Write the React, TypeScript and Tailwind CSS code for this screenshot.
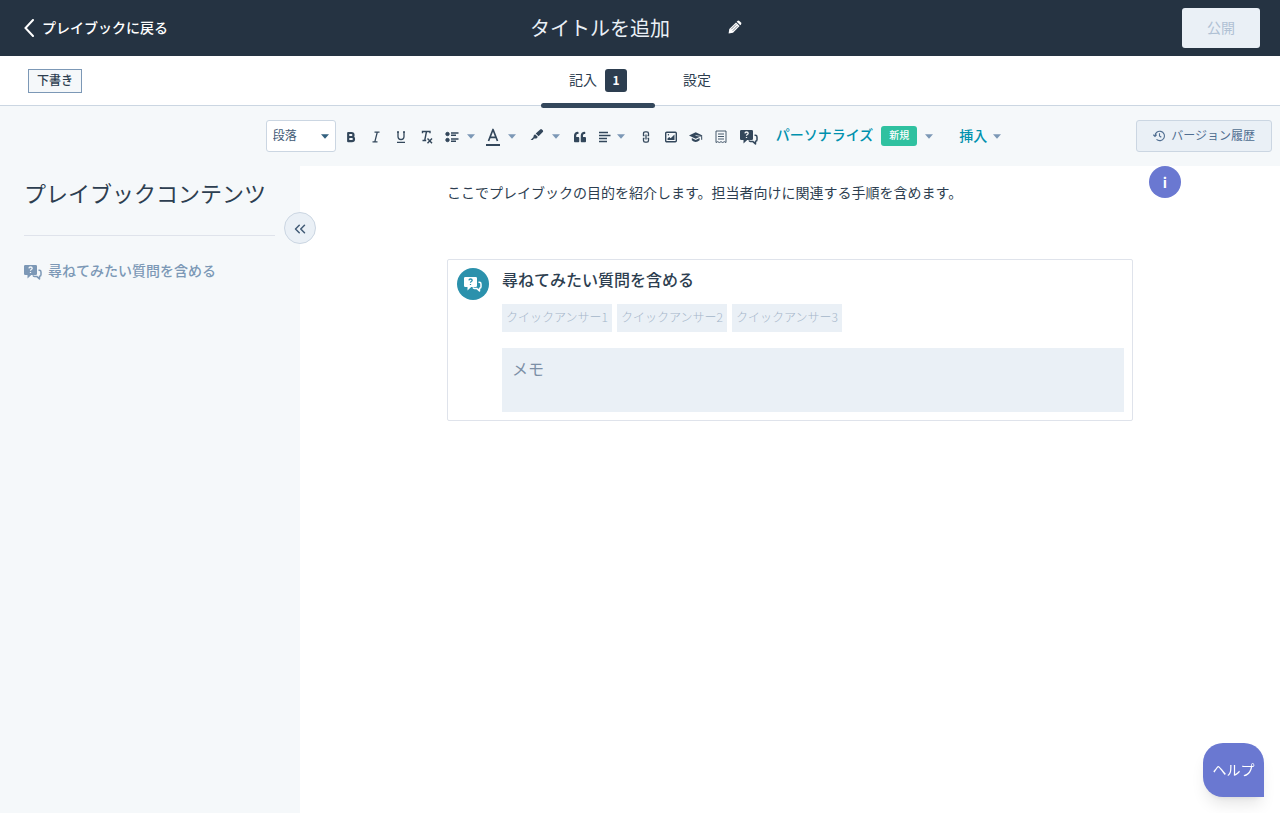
import React from 'react'
import { ChevronsLeft } from 'lucide-react'
import { FaQuoteLeft } from 'react-icons/fa'

const quickAnswers = ['クイックアンサー1', 'クイックアンサー2', 'クイックアンサー3']

const QuestionIcon = ({ className, mark }: { className: string; mark: string }) => (
  <svg viewBox="0 0 18 16" className={className} aria-hidden="true">
    <path
      d="M1.2 1h10.600q1.200 0 1.200 1.200v7.600q0 1.200-1.200 1.200H7.200L3.500 14.500V11H1.200Q0 11 0 9.800V2.200Q0 1 1.200 1z"
      fill="currentColor"
    />
    <path
      d="M14.500 6.200h.8q1.700 0 1.700 1.700v2.900q0 1.500-1.500 1.500V15l-2.800-2.600h-2.200q-1.200 0-1.500-1"
      fill="none"
      stroke="currentColor"
      strokeWidth="1.500"
      strokeLinejoin="round"
    />
    <path
      d="M4.900 4.300q.2-1.300 1.700-1.300t1.600 1.300q0 .8-.9 1.200-.8.400-.8 1.200M6.500 7.900v1.200"
      fill="none"
      stroke={mark}
      strokeWidth="1.300"
    />
  </svg>
)

const PencilIcon = () => (
  <svg viewBox="0 0 14 14" className="w-3.5 h-3.5" fill="currentColor" aria-hidden="true">
    <path d="M.6 13.400l.7-4.400L8 2.400 11.600 6 5 12.700z" />
    <path d="M8.700 1.700l.7-.7q1-.8 2 0l1.600 1.600q.8 1 0 2l-.7.700z" />
    <path d="M3.200 9.300L8.200 4.300M4.700 10.800l5-5" stroke="#253342" strokeWidth=".6" />
  </svg>
)

const Caret = ({ label }: { label: string }) => (
  <button type="button" aria-label={label} className="w-3 h-6 flex items-center justify-center text-[#7c98b6]">
    <svg viewBox="0 0 8 5" className="w-2 h-[5px]" fill="currentColor">
      <path d="M0 .3h8L4 4.700z" />
    </svg>
  </button>
)

const ToolButton = ({
  label,
  className = 'w-[25px]',
  children,
}: {
  label: string
  className?: string
  children: React.ReactNode
}) => (
  <button type="button" aria-label={label} className={`h-6 pt-0.5 flex items-center justify-center ${className}`}>
    {children}
  </button>
)

const Header = () => (
  <header className="h-14 bg-[#253342] text-white grid grid-cols-[1fr_auto_1fr] items-center pl-6 pr-5">
    <a href="#" className="flex items-center gap-2 text-sm font-medium">
      <svg viewBox="0 0 10 18" className="w-2.5 h-[18px]" fill="none" stroke="currentColor" strokeWidth="2">
        <path d="M9 1L1.500 9 9 17" strokeLinecap="round" />
      </svg>
      <span className="pb-0.5">プレイブックに戻る</span>
    </a>
    <div className="flex items-center pr-3">
      <h1 className="text-xl font-normal text-[#eaf0f6]">タイトルを追加</h1>
      <button type="button" aria-label="タイトルを編集" className="ml-[58px] w-3.5 h-6 pb-0.5 flex items-center">
        <PencilIcon />
      </button>
    </div>
    <button
      type="button"
      disabled
      className="justify-self-end h-10 w-[78px] pb-0.5 rounded-[3px] bg-[#eaf0f6] text-sm text-[#b0c1d4]"
    >
      公開
    </button>
  </header>
)

const TabBar = () => (
  <div className="h-[50px] border-b border-[#cbd6e2] grid grid-cols-[1fr_auto_1fr] px-7">
    <div className="flex items-center pb-0.5">
      <span className="h-6 px-2 border border-[#7c98b6] bg-[#f5f8fa] text-xs leading-5 font-medium">下書き</span>
    </div>
    <nav className="flex h-[52px]">
      <a href="#" className="relative px-7 h-12 flex items-center gap-2 text-sm">
        <span className="pb-0.5">記入</span>
        <span className="w-[22px] h-[23px] rounded-[3px] bg-[#2d3e50] text-white text-xs font-bold flex items-center justify-center">
          1
        </span>
        <span className="absolute left-0 right-0 top-[47px] h-[5px] rounded-full bg-[#33475b]"></span>
      </a>
      <a href="#" className="px-7 h-12 flex items-center text-sm">
        <span className="pb-0.5">設定</span>
      </a>
    </nav>
  </div>
)

const Toolbar = () => (
  <div className="h-[60px] bg-[#f5f8fa] grid grid-cols-[1fr_auto_1fr] items-center pr-2">
    <div></div>
    <div className="flex items-center text-[#33475b] pr-[3px]">
      <div className="relative">
        <select
          aria-label="段落スタイル"
          className="appearance-none w-[70px] h-8 pl-1.5 pb-0.5 rounded-[3px] border border-[#cbd6e2] bg-white text-xs text-[#425b76]"
        >
          <option>段落</option>
        </select>
        <svg
          viewBox="0 0 8 5"
          className="absolute right-[7px] top-3.5 w-2 h-[5px] pointer-events-none"
          fill="#33617f"
        >
          <path d="M0 .3h8L4 4.700z" />
        </svg>
      </div>
      <ToolButton label="太字" className="w-[25px] ml-[3px]">
        <svg viewBox="0 0 10 12" className="w-2.5 h-3" fill="none" stroke="currentColor" strokeWidth="2.200">
          <path d="M2.200 2h3.300a2 2 0 010 4H2.200zM2.200 6h3.700a2 2 0 010 4.200H2.200z" strokeLinejoin="round" />
        </svg>
      </ToolButton>
      <ToolButton label="斜体">
        <svg viewBox="0 0 10 12" className="w-2.5 h-3" fill="none" stroke="currentColor" strokeWidth="1.300">
          <path d="M3.500 1.200h5M1.500 10.800h5M6.300 1.200L3.800 10.800" />
        </svg>
      </ToolButton>
      <ToolButton label="下線">
        <svg viewBox="0 0 10 12" className="w-2.5 h-3" fill="none" stroke="currentColor" strokeWidth="1.300">
          <path d="M1 1h2M7 1h2M2 1v4.500a3 3 0 006 0V1M1 11.300h8" />
        </svg>
      </ToolButton>
      <ToolButton label="書式をクリア" className="w-[26px]">
        <svg viewBox="0 0 12 14" className="w-3 h-3.5" fill="none" stroke="currentColor" strokeWidth="1.400">
          <path d="M1.500 3.200V1.500h7.500v1.700M5.500 1.500L3.800 10M1.500 10.500h3.700M6.500 8.500l4.500 4.800M11 8.500l-4.500 4.800" />
        </svg>
      </ToolButton>
      <ToolButton label="リスト">
        <svg viewBox="0 0 14 12" className="w-3.5 h-3" fill="currentColor" stroke="currentColor">
          <circle cx="2.500" cy="3" r="1.700" />
          <circle cx="2.500" cy="9" r="1.700" />
          <path d="M6 2h7.500M6 4.300h5M6 8h7.500M6 10.300h5" strokeWidth="1.400" />
        </svg>
      </ToolButton>
      <Caret label="リストの種類" />
      <ToolButton label="文字色" className="w-[25px] ml-1">
        <svg viewBox="0 0 14 18" className="w-3.5 h-[18px]" fill="none" stroke="currentColor">
          <path d="M2.500 13L7 1.500 11.500 13M4 9.300h6" strokeWidth="1.700" strokeLinejoin="round" />
          <path d="M0 17h14" strokeWidth="2" />
        </svg>
      </ToolButton>
      <Caret label="文字色を選択" />
      <ToolButton label="ハイライト" className="w-[25px] pb-1 ml-[7px]">
        <svg viewBox="0 0 14 14" className="w-3.5 h-3.5" fill="currentColor">
          <path d="M10.200 1.400q.8-.8 1.700 0l.9.900q.8.900 0 1.700L8.600 8.300 5.700 5.500z" />
          <path d="M5 6.200L7.900 9l-1.500 1.500q-1.300.2-2.400 0L2.800 12H.6L3.500 9q-.1-1 .2-1.500z" />
        </svg>
      </ToolButton>
      <Caret label="ハイライト色を選択" />
      <ToolButton label="引用" className="w-[25px] ml-1.5">
        <FaQuoteLeft className="w-3 h-3" />
      </ToolButton>
      <ToolButton label="配置" className="w-5 ml-0.5">
        <svg viewBox="0 0 12 12" className="w-3 h-3" stroke="currentColor" strokeWidth="1.400">
          <path d="M0 1.500h9M0 4.500h11.500M0 7.500h8M0 10.500h8" />
        </svg>
      </ToolButton>
      <Caret label="配置を選択" />
      <ToolButton label="リンク" className="w-[25px] ml-[7px]">
        <svg viewBox="0 0 8 12" className="w-2 h-3" fill="none" stroke="currentColor" strokeWidth="1.300">
          <path d="M2.500 4.700h-1V2.500q0-1.700 1.600-1.700h1.800q1.600 0 1.600 1.700v2.200h-1M2.500 7.300h-1v2.200q0 1.700 1.600 1.700h1.800q1.600 0 1.600-1.700V7.300h-1M4 3.500v5" />
        </svg>
      </ToolButton>
      <ToolButton label="画像">
        <svg viewBox="0 0 12 12" className="w-3 h-3">
          <rect x=".7" y="1.200" width="10.600" height="9.600" rx="1" fill="none" stroke="currentColor" strokeWidth="1.400" />
          <path d="M2.500 9V7.500l1.700-1.500 1.500 1.300L9.500 3.500V9z" fill="currentColor" />
          <circle cx="3.400" cy="3.800" r=".7" fill="currentColor" />
        </svg>
      </ToolButton>
      <ToolButton label="ナレッジ">
        <svg viewBox="0 0 14 12" className="w-3.5 h-3" fill="currentColor">
          <path d="M6.700 1.300L13.500 4.500 6.700 7.700 0 4.500z" />
          <path d="M2.800 7l3.900 1.900L10.600 7v2.300q-3.900 3.600-7.800 0z" />
          <path d="M6.700 4.500l6 .8v3.500" fill="none" stroke="currentColor" />
          <path d="M6.500 4.400l5.200 1" stroke="#f5f8fa" strokeWidth=".7" />
        </svg>
      </ToolButton>
      <ToolButton label="スニペット">
        <svg viewBox="0 0 12 14" className="w-3 h-3.5" fill="none" stroke="currentColor">
          <path d="M1 12.500V1h10v11.500l-1.700-.8-1.600.8-1.700-.8-1.700.8-1.600-.8z" strokeWidth=".9" />
          <path d="M3 4h6M3 6.500h6M3 9h6" strokeWidth=".9" />
        </svg>
      </ToolButton>
      <ToolButton label="質問" className="w-[30px]">
        <QuestionIcon className="w-[18px] h-4" mark="#f5f8fa" />
      </ToolButton>
      <button type="button" className="ml-3 flex items-center gap-2 text-sm font-medium text-[#0091ae]">
        <span className="pb-1">パーソナライズ</span>
        <span className="w-9 h-5 rounded-[3px] bg-[#2fc1a0] text-white text-[10px] leading-[18px] font-medium">新規</span>
      </button>
      <div className="ml-1.5 flex">
        <Caret label="パーソナライズを選択" />
      </div>
      <button type="button" className="ml-6 mr-1 pb-0.5 text-sm font-medium text-[#0091ae]">
        挿入
      </button>
      <Caret label="挿入を選択" />
    </div>
    <button
      type="button"
      className="justify-self-end h-8 px-4 flex items-center gap-1.5 rounded-[3px] border border-[#cbd6e2] bg-[#eaf0f6] text-xs text-[#506e91]"
    >
      <svg viewBox="0 0 12 12" className="w-3 h-3" fill="none" stroke="currentColor" strokeWidth="1.100">
        <path d="M2 6a4.700 4.700 0 111.500 3.400M.2 4.700L2 6.500l1.700-1.800M6.500 3.300V6l1.800 1.300" />
      </svg>
      <span className="pb-0.5">バージョン履歴</span>
    </button>
  </div>
)

const Sidebar = () => (
  <aside className="relative w-[300px] shrink-0 bg-[#f5f8fa] pl-6 pr-[25px]">
    <h2 className="h-[70px] pt-2 border-b border-[#dfe3eb] text-[22px] leading-9 font-normal">
      プレイブックコンテンツ
    </h2>
    <a href="#" className="mt-6 flex items-center gap-1.5 text-sm font-medium text-[#7c98b6]">
      <QuestionIcon className="mt-1 w-[18px] h-4" mark="#f5f8fa" />
      尋ねてみたい質問を含める
    </a>
    <button
      type="button"
      aria-label="サイドバーを閉じる"
      className="absolute -right-4 top-[46px] w-8 h-8 pt-0.5 rounded-full border border-[#cbd6e2] bg-[#eaf0f6] flex items-center justify-center text-[#425b76]"
    >
      <ChevronsLeft size={18} />
    </button>
  </aside>
)

const QuestionCard = () => (
  <section className="mt-[55px] border border-[#dfe3eb] rounded-xs pt-2 pl-[9px] pr-2 pb-2 flex gap-[13px]">
    <div className="w-8 h-8 shrink-0 rounded-full bg-[#2b91ac] text-white flex items-center justify-center">
      <QuestionIcon className="w-[18px] h-4" mark="#2b91ac" />
    </div>
    <div className="flex-1">
      <h3 className="pb-3.5 text-base leading-[22px] font-medium">尋ねてみたい質問を含める</h3>
      <div className="flex gap-[5px]">
        {quickAnswers.map((answer) => (
          <button
            key={answer}
            type="button"
            disabled
            className="h-7 px-1 pb-0.5 bg-[#eaf0f6] text-xs font-light text-[#a5b6ca]"
          >
            {answer}
          </button>
        ))}
      </div>
      <textarea
        aria-label="メモ"
        placeholder="メモ"
        className="mt-4 block w-full h-16 px-2.5 py-2 resize-none bg-[#eaf0f6] text-base placeholder:text-[#7c8fa6]"
      ></textarea>
    </div>
  </section>
)

const App = () => {
  return (
    <div className="min-h-screen flex flex-col bg-white text-[#2d3e50] font-['Noto_Sans_CJK_JP',sans-serif]">
      <Header />
      <TabBar />
      <Toolbar />
      <div className="flex-1 flex">
        <Sidebar />
        <main className="relative flex-1">
          <div className="w-[70%] mx-auto pt-3.5">
            <p className="text-sm leading-6">ここでプレイブックの目的を紹介します。担当者向けに関連する手順を含めます。</p>
            <QuestionCard />
          </div>
          <button
            type="button"
            aria-label="情報"
            className="absolute right-[99px] top-0 w-8 h-8 rounded-full bg-[#6a78d1] text-white text-sm font-bold flex items-center justify-center"
          >
            i
          </button>
        </main>
      </div>
      <button
        type="button"
        className="fixed right-4 bottom-4 w-[61px] h-[54px] pb-0.5 rounded-[20px] rounded-br-none bg-[#6a78d1] text-white text-sm shadow-lg"
      >
        ヘルプ
      </button>
    </div>
  )
}

export default App
